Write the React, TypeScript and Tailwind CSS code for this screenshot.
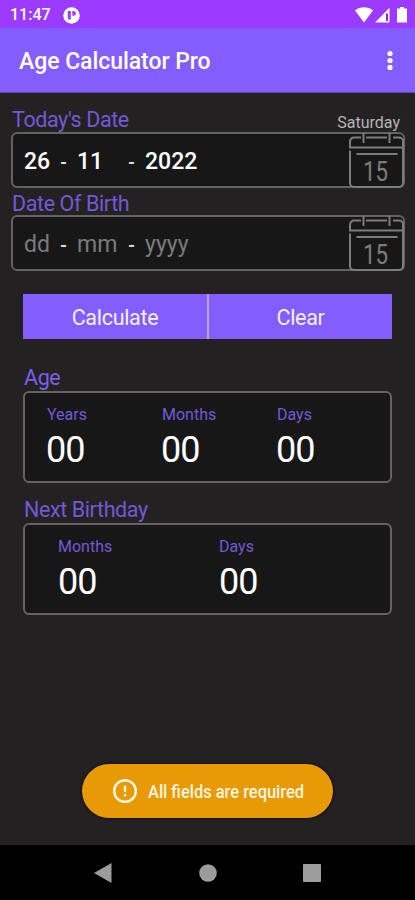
import { CircleAlert } from 'lucide-react';

const today = { day: '26', month: '11', year: '2022', weekday: 'Saturday' };

const ageResult = [
  { label: 'Years', value: '00' },
  { label: 'Months', value: '00' },
  { label: 'Days', value: '00' },
];

const birthdayResult = [
  { label: 'Months', value: '00' },
  { label: 'Days', value: '00' },
];

function StatusBar() {
  return (
    <div className="flex h-7 items-center justify-between bg-[#9b3bff] pl-[10px] pr-2 pt-[2px] text-white">
      <div className="flex items-center gap-[12px]">
        <span className="text-[16px] font-medium leading-none">11:47</span>
        <svg width="17" height="17" viewBox="0 0 17 17">
          <circle cx="8.5" cy="8.5" r="8.3" fill="#fff" />
          <path d="M4.800 4h3v8.500H6.300a1.500 1.500 0 0 1-1.500-1.500z" fill="#9b3bff" />
          <path d="M9.300 4h1.200a2.400 2.400 0 0 1 0 4.800H9.300z" fill="#9b3bff" />
        </svg>
      </div>
      <div className="flex items-center">
        <svg width="18" height="16" viewBox="0 0 18 16">
          <path d="M0 3.6C5.2-.8 12.800-.8 18 3.600L9 15.500z" fill="#fff" />
        </svg>
        <svg className="ml-[2px]" width="15" height="16" viewBox="0 0 15 16">
          <path d="M0 15.500L14.500.8v14.700z" fill="#fff" />
          <path d="M11 6.500h2v7.500h-2z" fill="#8428d8" />
        </svg>
        <svg className="ml-[7px]" width="10" height="16" viewBox="0 0 10 16">
          <path d="M3 0h4v1.600h3v14H0v-14h3z" fill="#fff" />
        </svg>
      </div>
    </div>
  );
}

function CalendarIcon() {
  return (
    <svg width="57" height="57" viewBox="0 0 57 57" fill="none" stroke="#7c7c7c" strokeWidth="2">
      <path d="M13 5.500H6a4 4 0 0 0-4 4V15.500h53V9.500a4 4 0 0 0-4-4h-6M18 5.500h21" />
      <path d="M15.500 1v10M41.500 1v10" />
      <path d="M2 18.500V51a4 4 0 0 0 4 4h45a4 4 0 0 0 4-4V15" />
      <path d="M8.500 22h41" />
      <text x="27.500" y="48.500" textAnchor="middle" fontSize="28" fontWeight="400" textLength="25" lengthAdjust="spacingAndGlyphs" fill="#7c7c7c" stroke="none">
        15
      </text>
    </svg>
  );
}

function DateField({ day, month, year, empty }: { day: string; month: string; year: string; empty?: boolean }) {
  return (
    <div
      className={`relative flex h-[56px] items-center rounded-md border-2 border-[#636363] bg-[#171717] pl-[11px] pt-[2px] text-[23px] leading-none ${
        empty ? 'text-[#7b7b7b]' : 'font-medium text-white'
      }`}
    >
      <span className="w-[36px]">{day}</span>
      <span className="w-[17px] pt-[3px] text-[18px] font-bold text-[#dcdcdc]">-</span>
      <span className="w-[51px]">{month}</span>
      <span className="w-[17px] pt-[3px] text-[18px] font-bold text-[#dcdcdc]">-</span>
      <span>{year}</span>
      <button className="absolute -right-[2px] -top-[2px]" aria-label="Pick a date">
        <CalendarIcon />
      </button>
    </div>
  );
}

export default function App() {
  return (
    <div className="flex h-[900px] w-[415px] flex-col overflow-hidden bg-[#242122] font-[Roboto,sans-serif]">
      <StatusBar />

      {/* App bar */}
      <header className="flex h-[65px] items-center justify-between border-b border-[#5b489c] bg-[#835dff] pl-[19px] pr-[22px] text-white">
        <h1 className="pt-[5px] text-[23px] font-medium tracking-[-0.05px]">Age Calculator Pro</h1>
        <svg width="6" height="20" viewBox="0 0 6 20" fill="currentColor">
          <circle cx="3" cy="3.500" r="2.600" />
          <circle cx="3" cy="10.500" r="2.600" />
          <circle cx="3" cy="17.400" r="2.600" />
        </svg>
      </header>

      <main className="flex flex-1 flex-col">
        {/* Dates */}
        <section className="pl-[11px] pr-[10px] pt-[14px]">
          <div className="flex h-[25px] items-center justify-between pl-px pr-[5px]">
            <span className="pt-[2px] text-[21.5px] tracking-[-0.4px] text-[#7359d5]">Today's Date</span>
            <span className="pt-[6px] text-[16px] text-[#b4b4b4]">{today.weekday}</span>
          </div>
          <DateField day={today.day} month={today.month} year={today.year} />
          <div className="flex h-[27px] items-center pl-px pt-[5px] text-[21.5px] tracking-[-0.4px] text-[#7359d5]">
            Date Of Birth
          </div>
          <DateField day="dd" month="mm" year="yyyy" empty />
        </section>

        {/* Actions */}
        <div className="mx-[23px] mt-[23px] grid h-[45px] grid-cols-[186px_1fr] text-[21.5px] tracking-[-0.3px] text-[#f3efff]">
          <button className="border-r-2 border-[#b7a5fb] bg-[#835dff] pt-[4px]">Calculate</button>
          <button className="bg-[#835dff] pt-[4px]">Clear</button>
        </div>

        {/* Results */}
        <section className="mx-[23px] mt-[25px]">
          <h2 className="h-[27px] pl-px text-[21.5px] leading-[27px] tracking-[-0.4px] text-[#7b60e8]">Age</h2>
          <div className="grid h-[92px] grid-cols-[115px_115px_1fr] rounded-md border-2 border-[#636363] bg-[#171717] pl-[22px]">
            {ageResult.map((item) => (
              <div key={item.label} className="pt-[11px]">
                <p className="text-[16px] leading-[22px] text-[#7359d5]">{item.label}</p>
                <p className="-ml-px mt-[4px] text-[36px] leading-[40px] tracking-[-1px] text-white">{item.value}</p>
              </div>
            ))}
          </div>
          <h2 className="mt-[13px] h-[27px] pl-px text-[21.5px] leading-[27px] tracking-[-0.4px] text-[#7359d5]">
            Next Birthday
          </h2>
          <div className="grid h-[92px] grid-cols-[161px_1fr] rounded-md border-2 border-[#636363] bg-[#171717] pl-[33px]">
            {birthdayResult.map((item) => (
              <div key={item.label} className="pt-[11px]">
                <p className="text-[16px] leading-[22px] text-[#7359d5]">{item.label}</p>
                <p className="mt-[4px] text-[36px] leading-[40px] tracking-[-1px] text-white">{item.value}</p>
              </div>
            ))}
          </div>
        </section>

        {/* Toast */}
        <div className="mx-auto mb-[27px] mt-auto flex h-[54px] w-[251px] items-center rounded-full bg-[#e89a05] pl-[30px] text-[#fff6e2] shadow-[0_0_2px_1px_#111]">
          <CircleAlert className="h-[26px] w-[26px] shrink-0" strokeWidth={2.3} />
          <span className="ml-[10px] origin-left scale-x-[0.865] whitespace-nowrap pt-[2px] text-[19px] font-medium">
            All fields are required
          </span>
        </div>
      </main>

      {/* System navigation */}
      <nav className="flex h-[55px] items-center justify-between bg-black px-[94px]">
        <svg width="18" height="20" viewBox="0 0 18 20" fill="#9c9c9c">
          <path d="M17.500 0v20L0 10z" />
        </svg>
        <svg width="18" height="18" viewBox="0 0 18 18" fill="#9c9c9c">
          <circle cx="9" cy="9" r="8.800" />
        </svg>
        <svg width="18" height="18" viewBox="0 0 18 18" fill="#9c9c9c">
          <rect width="18" height="18" rx="1" />
        </svg>
      </nav>
    </div>
  );
}
